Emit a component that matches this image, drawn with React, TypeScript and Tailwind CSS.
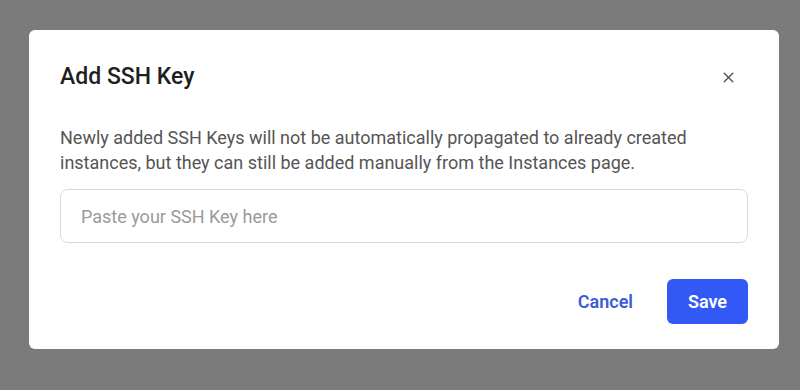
import { X } from "lucide-react";

export default function App() {
    return (
        <div className="w-[800px] h-[390px] bg-[#7b7b7b] pt-[30px] pl-[29px] font-['Roboto','Liberation_Sans',sans-serif]">
            <div className="w-[750px] h-[319px] bg-white rounded-[6px] px-[31px] pt-[33px]">
                {/* Header */}
                <div className="flex items-center justify-between h-[28px]">
                    <h2 className="text-[23px] leading-[28px] font-medium text-[#1f1f1f]">Add SSH Key</h2>
                    <button className="mr-[11px] text-[#555]">
                        <X className="h-[17px] w-[17px]" strokeWidth={2} />
                    </button>
                </div>

                <p className="mt-[34px] text-[18px] leading-[25px] text-[#555]">
                    Newly added SSH Keys will not be automatically propagated to already created
                    <br />
                    instances, but they can still be added manually from the Instances page.
                </p>

                <input
                    type="text"
                    placeholder="Paste your SSH Key here"
                    className="mt-[14px] w-full h-[54px] rounded-[8px] border border-[#d9d9d9] px-[20px] text-[18px] text-[#333] placeholder:text-[#9a9a9a] outline-none"
                />

                <div className="mt-[36px] flex justify-end items-center gap-[34px]">
                    <button className="text-[18px] font-semibold text-[#3b5dd6]">Cancel</button>
                    <button className="w-[81px] h-[45px] rounded-[6px] bg-[#3259f5] text-white text-[18px] font-semibold">
                        Save
                    </button>
                </div>
            </div>
        </div>
    );
}
